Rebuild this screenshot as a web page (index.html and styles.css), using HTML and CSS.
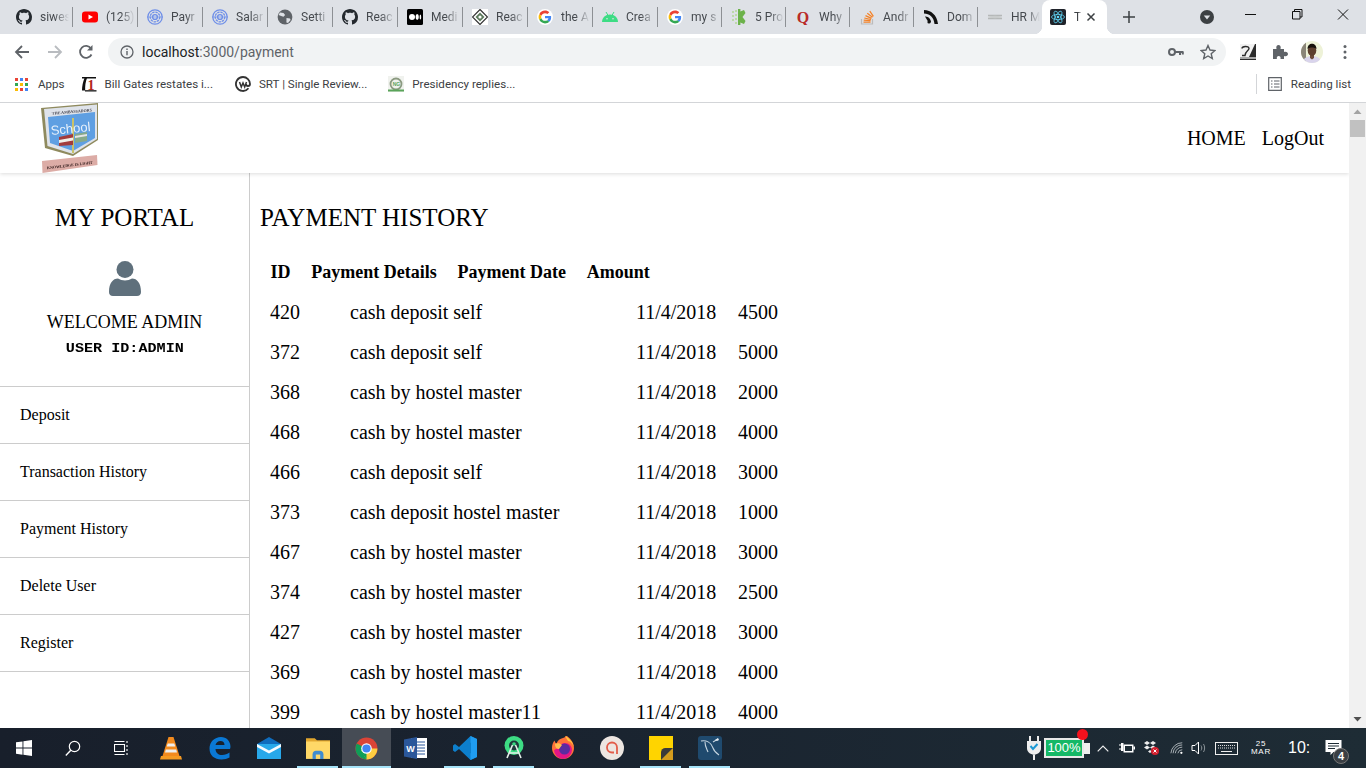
FILE: index.html
```html
<!DOCTYPE html>
<html lang="en">
<head>
<meta charset="utf-8">
<title>Payment History</title>
<link rel="stylesheet" href="styles.css">
</head>
<body>
<svg class="defs" width="0" height="0" aria-hidden="true">
  <symbol id="gh" viewBox="0 0 16 16"><path fill="#24292e" d="M8 0C3.58 0 0 3.58 0 8c0 3.54 2.29 6.53 5.47 7.59.4.07.55-.17.55-.38 0-.19-.01-.82-.01-1.49-2.01.37-2.53-.49-2.69-.94-.09-.23-.48-.94-.82-1.13-.28-.15-.68-.52-.01-.53.63-.01 1.08.58 1.23.82.72 1.21 1.87.87 2.33.66.07-.52.28-.87.51-1.07-1.78-.2-3.64-.89-3.64-3.95 0-.87.31-1.59.82-2.15-.08-.2-.36-1.02.08-2.12 0 0 .67-.21 2.2.82.64-.18 1.32-.27 2-.27.68 0 1.36.09 2 .27 1.53-1.04 2.2-.82 2.2-.82.44 1.1.16 1.92.08 2.12.51.56.82 1.27.82 2.15 0 3.07-1.87 3.75-3.65 3.95.29.25.54.73.54 1.48 0 1.07-.01 1.93-.01 2.2 0 .21.15.46.55.38A8.013 8.013 0 0016 8c0-4.42-3.58-8-8-8z"/></symbol>
  <symbol id="goo" viewBox="-6 -6 60 60"><circle cx="24" cy="24" r="30" fill="#fff"/><path fill="#EA4335" d="M24 9.5c3.54 0 6.71 1.22 9.21 3.6l6.85-6.85C35.9 2.38 30.47 0 24 0 14.62 0 6.51 5.38 2.56 13.22l7.98 6.19C12.43 13.72 17.74 9.5 24 9.5z"/><path fill="#4285F4" d="M46.98 24.55c0-1.57-.15-3.09-.38-4.55H24v9.02h12.94c-.58 2.96-2.26 5.48-4.78 7.18l7.73 6c4.51-4.18 7.09-10.36 7.09-17.65z"/><path fill="#FBBC05" d="M10.53 28.59c-.48-1.45-.76-2.99-.76-4.59s.27-3.14.76-4.59l-7.98-6.19C.92 16.46 0 20.12 0 24c0 3.88.92 7.54 2.56 10.78l7.97-6.19z"/><path fill="#34A853" d="M24 48c6.48 0 11.93-2.13 16.03-5.81l-7.73-6c-2.15 1.45-4.92 2.3-8.3 2.3-6.26 0-11.57-4.22-13.47-9.91l-7.98 6.19C6.51 42.62 14.62 48 24 48z"/></symbol>
  <symbol id="pay" viewBox="0 0 16 16"><g fill="none" stroke="#6f8fe8"><circle cx="8" cy="8" r="7.2" stroke-width="1.3"/><circle cx="8" cy="8" r="4.8" stroke-width="1.3" stroke-dasharray="2.4 .8"/><circle cx="8" cy="8" r="2.4" stroke-width="1.4"/><path d="M0 8h16" stroke-width=".7"/></g></symbol>
</svg>

<div class="tabstrip">
  <div class="tab"><svg class="fav"><use href="#gh"/></svg><span class="tab-title">siwes</span></div>
  <div class="tab"><svg class="fav" viewBox="0 0 16 16"><rect y="2.5" width="16" height="11" rx="3" fill="#f00"/><path d="M6.5 5.5v5L11 8z" fill="#fff"/></svg><span class="tab-title">(125)</span></div>
  <div class="tab"><svg class="fav"><use href="#pay"/></svg><span class="tab-title">Payr</span></div>
  <div class="tab"><svg class="fav"><use href="#pay"/></svg><span class="tab-title">Salar</span></div>
  <div class="tab"><svg class="fav" viewBox="0 0 16 16"><circle cx="8" cy="8" r="7.4" fill="#5f6368"/><path d="M3 3.5l3.5.6 1.6 2-1.6 1.6-1.6-.4L1.5 6zM9.5 9l3.5.6.6 1.5-2.6 3-1.6-.6z" fill="#dee1e6"/></svg><span class="tab-title">Setti</span></div>
  <div class="tab"><svg class="fav"><use href="#gh"/></svg><span class="tab-title">Reac</span></div>
  <div class="tab"><svg class="fav" viewBox="0 0 16 16"><rect width="16" height="16" rx="1.5" fill="#000"/><circle cx="5" cy="8" r="3" fill="#fff"/><ellipse cx="10.2" cy="8" rx="1.6" ry="2.9" fill="#fff"/><ellipse cx="13.4" cy="8" rx=".8" ry="2.6" fill="#fff"/></svg><span class="tab-title">Medi</span></div>
  <div class="tab"><svg class="fav" viewBox="0 0 16 16"><rect width="16" height="16" fill="#fff"/><path d="M8 .5L15.5 8 8 15.5.5 8z" fill="none" stroke="#333" stroke-width="1.2"/><path d="M8 3.5L12.5 8 8 12.5 3.5 8z" fill="#5d7a5d"/><circle cx="8" cy="8" r="1.6" fill="#fff"/></svg><span class="tab-title">Reac</span></div>
  <div class="tab"><svg class="fav"><use href="#goo"/></svg><span class="tab-title">the A</span></div>
  <div class="tab"><svg class="fav" viewBox="0 0 16 16"><path d="M0 13c0-4.4 3.6-7.5 8-7.5s8 3.1 8 7.5z" fill="#3ddc84"/><path d="M4 3l1.8 3M12 3l-1.8 3" stroke="#3ddc84" stroke-width="1"/><circle cx="5" cy="9.8" r=".8" fill="#dee1e6"/><circle cx="11" cy="9.8" r=".8" fill="#dee1e6"/></svg><span class="tab-title">Crea</span></div>
  <div class="tab narrow"><svg class="fav"><use href="#goo"/></svg><span class="tab-title">my s</span></div>
  <div class="tab narrow"><svg class="fav" viewBox="0 0 16 16"><g fill="#6cb24a"><rect x="7" y="0" width="2.4" height="16"/><path d="M8 3l5-2 1.5 3-3 4 3 4-1.5 3-5-2z"/></g><g fill="#bcd9a8"><rect x="1" y="2" width="2" height="2"/><rect x="4" y="1" width="2" height="2"/><rect x="1" y="6" width="2" height="2"/><rect x="4" y="5" width="2" height="2"/><rect x="1" y="10" width="2" height="2"/><rect x="4" y="9" width="2" height="2"/><rect x="4" y="13" width="2" height="2"/></g></svg><span class="tab-title">5 Pro</span></div>
  <div class="tab narrow"><svg class="fav" viewBox="0 0 16 16"><text class="quora" x="8" y="13.5" text-anchor="middle">Q</text></svg><span class="tab-title">Why</span></div>
  <div class="tab narrow"><svg class="fav" viewBox="0 0 16 16"><path d="M2.5 10v5h11v-5" fill="none" stroke="#bcbbbb" stroke-width="1.2"/><path d="M4.5 13.2h7M4.7 11.2l6.9.5M5.3 9l6.7 1.5M6.500 6.600l6 2.800M8.300 4.300l5.200 4M10.800 2.200l3.600 5.200" fill="none" stroke="#f48024" stroke-width="1.2"/></svg><span class="tab-title">Andr</span></div>
  <div class="tab narrow"><svg class="fav" viewBox="0 0 16 16"><path d="M1 1c7 0 13 5 14 14h-3.5C11 8.5 6.5 4.5 1 4.5z" fill="#111"/><path d="M2 7.5c3-.5 6 2.5 6 6l-3-1z" fill="#111"/><circle cx="6" cy="13" r="1.6" fill="#111"/></svg><span class="tab-title">Dom</span></div>
  <div class="tab narrow last"><svg class="fav" viewBox="0 0 16 16"><path d="M1 6.500h14M1 9.500h14" stroke="#b5b8b8" stroke-width="1.500"/><ellipse cx="8" cy="8" rx="7" ry="1.200" fill="#c9cccc"/></svg><span class="tab-title">HR M</span></div>
  <div class="tab-active">
    <svg class="fav" viewBox="0 0 16 16"><rect width="16" height="16" rx="2" fill="#20232a"/><g fill="none" stroke="#61dafb" stroke-width=".75"><ellipse cx="8" cy="8" rx="6.500" ry="2.600"/><ellipse cx="8" cy="8" rx="6.500" ry="2.600" transform="rotate(60 8 8)"/><ellipse cx="8" cy="8" rx="6.500" ry="2.600" transform="rotate(120 8 8)"/></g><circle cx="8" cy="8" r="1.300" fill="#61dafb"/></svg>
    <span class="tab-title active-title">T</span>
    <svg class="tab-close" viewBox="0 0 10 10"><path d="M1.500 1.500l7 7M8.500 1.500l-7 7" stroke="#3c4043" stroke-width="1.500"/></svg>
  </div>
  <svg class="new-tab" viewBox="0 0 12 12"><path d="M6 0v12M0 6h12" stroke="#3c4043" stroke-width="1.500"/></svg>
  <svg class="profile-drop" viewBox="0 0 14 14"><circle cx="7" cy="7" r="7" fill="#3c4043"/><path d="M3.800 5.500h6.400L7 9.500z" fill="#dee1e6"/></svg>
  <div class="win-btns">
    <svg class="win-btn" viewBox="0 0 46 34"><path d="M17 14.500h11" stroke="#111" stroke-width="1"/></svg>
    <svg class="win-btn" viewBox="0 0 46 34"><path d="M18.500 11.500h7.500v7.500h-7.500zM20.500 11.500v-2h7.500v7.500h-2" fill="none" stroke="#111" stroke-width="1"/></svg>
    <svg class="win-btn" viewBox="0 0 46 34"><path d="M18 9.500l10 10M28 9.500l-10 10" stroke="#111" stroke-width="1"/></svg>
  </div>
</div>

<div class="toolbar">
  <svg class="tool back" viewBox="0 0 16 16"><path d="M15 8H2M8 2L2 8l6 6" fill="none" stroke="#5f6368" stroke-width="1.800"/></svg>
  <svg class="tool fwd" viewBox="0 0 16 16"><path d="M1 8h13M8 2l6 6-6 6" fill="none" stroke="#b9bcc0" stroke-width="1.800"/></svg>
  <svg class="tool reload" viewBox="0 0 16 16"><path d="M13.500 10.500A6 6 0 1 1 13 4.500" fill="none" stroke="#5f6368" stroke-width="1.800"/><path d="M14.500 1v5.500H9z" fill="#5f6368"/></svg>
  <div class="omnibox">
    <svg class="info" viewBox="0 0 14 14"><circle cx="7" cy="7" r="6" fill="none" stroke="#5f6368" stroke-width="1.300"/><path d="M7 6v4.200M7 3.600v1.400" stroke="#5f6368" stroke-width="1.400"/></svg>
    <span class="url"><span class="url-host">localhost</span>:3000/payment</span>
    <svg class="key" viewBox="0 0 16 10"><circle cx="4" cy="5" r="3" fill="none" stroke="#5f6368" stroke-width="2"/><path d="M7 5h8.500M12 5v3M14.800 5v2.500" stroke="#5f6368" stroke-width="2"/></svg>
    <svg class="star" viewBox="0 0 16 16"><path d="M8 1.500l2 4.500 4.900.5-3.700 3.200 1.100 4.800L8 12l-4.300 2.500 1.100-4.800L1.100 6.500 6 6z" fill="none" stroke="#5f6368" stroke-width="1.400"/></svg>
  </div>
  <svg class="ext" viewBox="0 0 16 16"><rect width="16" height="16" fill="#2b2b2b"/><path d="M0 0h15L9 13H0z" fill="#f2f2f2"/><path d="M2 4.500c0-2.500 7-3 7 0 0 2-4 3-4 7h-3" fill="none" stroke="#2b2b2b" stroke-width="1.400"/><rect y="13" width="16" height="2" fill="#a8a8a8"/></svg>
  <svg class="puzzle" viewBox="0 0 16 16"><path d="M1 5h3.500c-.8-2.500.5-4 2-4s2.800 1.500 2 4H12v3c2.500-.8 4 .5 4 2s-1.500 2.800-4 2v3H8.500c.5-2-.5-3-1.800-3s-2.300 1-1.800 3H1z" fill="#5f6368"/></svg>
  <svg class="me" viewBox="0 0 22 22"><defs><clipPath id="mc"><circle cx="11" cy="11" r="11"/></clipPath></defs><g clip-path="url(#mc)"><rect width="22" height="22" fill="#eef2d8"/><rect width="5" height="22" fill="#8a8578"/><path d="M2 22c0-5 4-7 9-7s9 2 9 7z" fill="#d9d4ec"/><path d="M9 14h4v3l-2 1.500L9 17z" fill="#6b4a38"/><ellipse cx="11" cy="9.500" rx="4.300" ry="5.300" fill="#5d3f2e"/><path d="M6.500 8c0-7 9-7 9 0-2-2-7-2-9 0z" fill="#17110c"/></g></svg>
  <svg class="dots" viewBox="0 0 4 16"><circle cx="2" cy="2.500" r="1.500" fill="#5f6368"/><circle cx="2" cy="8" r="1.500" fill="#5f6368"/><circle cx="2" cy="13.500" r="1.500" fill="#5f6368"/></svg>
</div>

<div class="bookmarks">
  <div class="bm bm-apps">
    <svg class="bm-grid" viewBox="0 0 13 13"><rect width="3" height="3" fill="#ea4335"/><rect x="5" width="3" height="3" fill="#4285f4"/><rect x="10" width="3" height="3" fill="#ea4335"/><rect y="5" width="3" height="3" fill="#34a853"/><rect x="5" y="5" width="3" height="3" fill="#fbbc05"/><rect x="10" y="5" width="3" height="3" fill="#34a853"/><rect y="10" width="3" height="3" fill="#fbbc05"/><rect x="5" y="10" width="3" height="3" fill="#ea4335"/><rect x="10" y="10" width="3" height="3" fill="#4285f4"/></svg>
    <span>Apps</span>
  </div>
  <div class="bm bm-gates">
    <svg class="bm-ico" viewBox="0 0 16 16"><path d="M1 1h14v1.500H1z" fill="#111"/><path d="M3.500 2C2 6 1 10 1 14.500h3.200C4 10 4.500 6 6 2z" fill="#111"/><path d="M4 14.200h11.500v1.300H4z" fill="#111"/><text class="bm-one" x="10" y="13.500" text-anchor="middle">1</text></svg>
    <span>Bill Gates restates i...</span>
  </div>
  <div class="bm bm-srt">
    <svg class="bm-ico" viewBox="0 0 16 16"><path d="M8 1a7 7 0 1 0 5.500 11.300" fill="none" stroke="#333" stroke-width="1.800"/><path d="M8 1a7 7 0 0 1 7 7 2 2 0 0 1-4 0" fill="none" stroke="#333" stroke-width="1.800"/><path d="M4.500 6l1.800 5L8 7l1.700 4 1.800-5" fill="none" stroke="#333" stroke-width="1.500"/></svg>
    <span>SRT | Single Review...</span>
  </div>
  <div class="bm bm-pres">
    <svg class="bm-ico" viewBox="0 0 16 16"><rect width="16" height="16" fill="#f0f2ee"/><circle cx="8" cy="8" r="5.500" fill="none" stroke="#8b9a80" stroke-width="1.800"/><text class="bm-ng" x="8.500" y="10">NG</text><rect y="13.500" width="16" height="2" fill="#5aa45a"/></svg>
    <span>Presidency replies...</span>
  </div>
  <div class="reading">
    <svg class="bm-read" viewBox="0 0 14 14"><path d="M.7.700h12.600v12.600H.7zM3 4h1.500M6 4h5.500M3 7h1.500M6 7h5.500M3 10h1.500M6 10h5.500" fill="none" stroke="#5f6368" stroke-width="1.200"/></svg>
    <span>Reading list</span>
  </div>
</div>

<div class="viewport">
  <div class="site">
    <header class="site-header">
      <svg class="logo" viewBox="0 0 60 70">
        <path d="M1 5L58 0v37L33 53 5 45z" fill="#8f8a5e"/>
        <path d="M4 6L57 1.500V36L33 51 7.500 43z" fill="#dfe3ea"/>
        <path d="M8 14L55 9v26L33 48 10 40z" fill="#5f9fe2"/>
        <path d="M32 15h2v35h-2z" fill="#c9c26a"/>
        <text class="logo-top" x="32" y="10" text-anchor="middle" transform="rotate(-5 32 10)">THE AMBASSADORS</text>
        <text class="logo-school" x="31" y="30" text-anchor="middle" transform="rotate(-6 31 30)">School</text>
        <path d="M19 34l14-3v11l-14 1z" fill="#a33b3b"/>
        <path d="M19 37l14-2.500v3L19 40z" fill="#f1efe8"/>
        <path d="M35 31l12-2v9l-12 2z" fill="#86a98a"/>
        <path d="M35 33l12-2v2l-12 2z" fill="#e5e5e5"/>
        <path d="M2 58l55-6 .5 10-55 8z" fill="#dcaca6"/>
        <text class="logo-motto" x="30" y="63.500" text-anchor="middle" transform="rotate(-7 30 64)">KNOWLEDGE IS LIGHT</text>
      </svg>
      <nav class="site-nav"><a>HOME</a><a>LogOut</a></nav>
    </header>
    <div class="site-body">
      <aside class="sidebar">
        <h2 class="portal">MY PORTAL</h2>
        <svg class="avatar" viewBox="0 0 32 35"><circle cx="16" cy="8.500" r="8.500" fill="#5f707c"/><path d="M0 31c0-9 4-13.500 9-13.500 4 2.500 10 2.500 14 0 5 0 9 4.500 9 13.500 0 2.500-1.500 4-4 4H4c-2.500 0-4-1.500-4-4z" fill="#5f707c"/></svg>
        <div class="welcome">WELCOME ADMIN</div>
        <div class="userid">USER ID:ADMIN</div>
        <ul class="menu">
          <li>Deposit</li>
          <li>Transaction History</li>
          <li>Payment History</li>
          <li>Delete User</li>
          <li>Register</li>
        </ul>
      </aside>
      <main class="main">
        <h2 class="title">PAYMENT HISTORY</h2>
        <table class="head-table"><tr><th>ID</th><th>Payment Details</th><th>Payment Date</th><th>Amount</th></tr></table>
        <table class="data-table">
          <tr><td class="c-id">420</td><td class="c-det">cash deposit self</td><td class="c-date">11/4/2018</td><td>4500</td></tr>
          <tr><td class="c-id">372</td><td class="c-det">cash deposit self</td><td class="c-date">11/4/2018</td><td>5000</td></tr>
          <tr><td class="c-id">368</td><td class="c-det">cash by hostel master</td><td class="c-date">11/4/2018</td><td>2000</td></tr>
          <tr><td class="c-id">468</td><td class="c-det">cash by hostel master</td><td class="c-date">11/4/2018</td><td>4000</td></tr>
          <tr><td class="c-id">466</td><td class="c-det">cash deposit self</td><td class="c-date">11/4/2018</td><td>3000</td></tr>
          <tr><td class="c-id">373</td><td class="c-det">cash deposit hostel master</td><td class="c-date">11/4/2018</td><td>1000</td></tr>
          <tr><td class="c-id">467</td><td class="c-det">cash by hostel master</td><td class="c-date">11/4/2018</td><td>3000</td></tr>
          <tr><td class="c-id">374</td><td class="c-det">cash by hostel master</td><td class="c-date">11/4/2018</td><td>2500</td></tr>
          <tr><td class="c-id">427</td><td class="c-det">cash by hostel master</td><td class="c-date">11/4/2018</td><td>3000</td></tr>
          <tr><td class="c-id">369</td><td class="c-det">cash by hostel master</td><td class="c-date">11/4/2018</td><td>4000</td></tr>
          <tr><td class="c-id">399</td><td class="c-det">cash by hostel master11</td><td class="c-date">11/4/2018</td><td>4000</td></tr>
        </table>
      </main>
    </div>
  </div>
  <div class="scrollbar">
    <svg class="sb-arrow" viewBox="0 0 17 17"><path d="M4.500 11l4-4.500 4 4.500z" fill="#a3a3a3"/></svg>
    <div class="sb-thumb"></div>
    <svg class="sb-arrow sb-down" viewBox="0 0 17 17"><path d="M4.500 6l4 4.500 4-4.500z" fill="#505050"/></svg>
  </div>
</div>

<div class="taskbar">
  <div class="tb-item"><svg class="tb-ico" viewBox="0 0 16 16"><path d="M0 2.300l6.500-.9v6.200H0zM7.400 1.300L16 0v7.600H7.400zM0 8.500h6.500v6.200L0 13.700zM7.400 8.500H16V16l-8.600-1.200z" fill="#fff"/></svg></div>
  <div class="tb-item"><svg class="tb-ico" viewBox="0 0 16 16"><circle cx="9.500" cy="6.500" r="5.200" fill="none" stroke="#fff" stroke-width="1.200"/><path d="M5.800 10.200L.8 15.500" stroke="#fff" stroke-width="1.400"/></svg></div>
  <div class="tb-item"><svg class="tb-ico" viewBox="0 0 16 16"><path d="M.5 4.500h10v7H.5zM.5 1.500h10M.5 14.500h10M13 1v2M13 5v2M13 9v2M13 13v2" fill="none" stroke="#fff" stroke-width="1.100"/></svg></div>
  <div class="tb-item"><svg class="tb-big" viewBox="0 0 22 24"><path d="M8.500 1h5l6 19h-17z" fill="#f28a1e"/><path d="M7.700 7.500h6.600l.9 3H6.800zM5.800 13.500h10.400l.8 3H5z" fill="#eee"/><path d="M1 20h20l1 3.500H0z" fill="#f59a22"/></svg></div>
  <div class="tb-item"><svg class="tb-big" viewBox="0 0 22 24"><path d="M21 13H6.500c.3 4 3 6 6.500 6 3 0 5.500-1 7.500-2.500v5c-2 1.300-5 2-8 2-7 0-12-4-12-11C.5 6 5.500 1 12 1c5.500 0 9.500 4 9.500 10zM15.500 9c0-2.500-1.500-4-4-4-2.700 0-4.500 1.700-5 4z" fill="#0a78d4"/></svg></div>
  <div class="tb-item"><svg class="tb-big" viewBox="0 0 24 22"><path d="M12 0l12 7v15H0V7z" fill="#0f6cbd"/><path d="M0 7h24v15H0z" fill="#28a8ea"/><path d="M0 7l12 6.500L24 7v3l-12 6.500L0 10z" fill="#f6fbff"/></svg></div>
  <div class="tb-item"><svg class="tb-big" viewBox="0 0 22 20"><path d="M0 1h8l2 2h12v5H0z" fill="#e2a72e"/><rect y="4" width="22" height="16" fill="#ffd867"/><path d="M6 16c0-2.500 1.500-3.500 3-3.500h4c1.500 0 3 1 3 3.500v4H6z" fill="#3f8bd0"/><rect x="9" y="16" width="4" height="4" fill="#ffd867"/></svg></div>
  <div class="tb-item tb-active"><svg class="tb-big chrome" viewBox="0 0 24 24"><circle cx="12" cy="12" r="11.500" fill="#db4437"/><path d="M12 12L1.800 6.800A11.500 11.500 0 0 0 12 23.500z" fill="#0f9d58"/><path d="M12 12h11.300A11.500 11.500 0 0 1 12 23.500L6.500 14z" fill="#ffcd40"/><path d="M12 12L6.500 15.200 12 23.500z" fill="#0f9d58"/><circle cx="12" cy="12" r="5.500" fill="#fff"/><circle cx="12" cy="12" r="4.300" fill="#4285f4"/></svg></div>
  <div class="tb-item"><svg class="tb-big" viewBox="0 0 24 22"><rect x="7" y="1" width="16" height="20" fill="#fff"/><path d="M13 5h8M13 8h8M13 11h8M13 14h8M13 17h8" stroke="#2b579a" stroke-width="1"/><path d="M0 2.500L13 0v22L0 19.500z" fill="#2b579a"/><text class="word-w" x="6.500" y="15" text-anchor="middle">W</text></svg></div>
  <div class="tb-item"><svg class="tb-big" viewBox="0 0 24 24"><path d="M17.500 0L24 3v18l-6.500 3L6 13l-4 3-2-1.500v-5L2 8l4 3z" fill="#0d7fcc"/><path d="M17.500 0L24 3v18l-6.500 3z" fill="#1f9cf0"/><path d="M18 6.500L10.500 12l7.500 5.500z" fill="#0d7fcc"/></svg></div>
  <div class="tb-item"><svg class="tb-big" viewBox="0 0 22 24"><circle cx="11" cy="9.500" r="9.500" fill="#3ddc84"/><circle cx="11" cy="9.500" r="5" fill="#1f3b3c"/><circle cx="11" cy="8" r="1.800" fill="#3ddc84"/><path d="M9.500 9L4 22M12.500 9L18 22M6 17h10" stroke="#e6f0ea" stroke-width="1.600"/></svg></div>
  <div class="tb-item"><svg class="tb-big" viewBox="0 0 24 24"><path d="M12 2c3-.5 2-2.500 4-2 3 2.500 7 6 7 12a11 11 0 1 1-22 0C1 9 2 6 3.500 4.500 4 6 4.500 7 5.500 7.500 6.500 4.500 9 2.500 12 2z" fill="#ff7139"/><path d="M14 0c4 2 8 6 9 11-1-3-4-6-6-6z" fill="#ffc93c"/><path d="M3 14a9 9 0 0 0 18 0c0-4-3-7-7-7-3 0-5 2-5 4z" fill="#e31587"/><circle cx="13.500" cy="13" r="5.500" fill="#5a2ca0"/><path d="M4 8c2-1 5-1 7 1l-3 4c-2 0-4-1-4-5z" fill="#ffbd4f"/></svg></div>
  <div class="tb-item"><svg class="tb-big" viewBox="0 0 24 24"><circle cx="12" cy="12" r="12" fill="#ede6e1"/><path d="M17 18V11.500a5 5 0 1 0-5 5h2" fill="none" stroke="#e25d4a" stroke-width="1.800"/></svg></div>
  <div class="tb-item"><svg class="tb-big" viewBox="0 0 22 22"><rect width="22" height="22" fill="#ffd400"/><path d="M22 11v11H11z" fill="#d49c1e"/><path d="M22 11H15a4 4 0 0 0-4 4v7z" fill="#3a3a3a"/></svg></div>
  <div class="tb-item"><svg class="tb-big" viewBox="0 0 24 24"><rect width="24" height="24" rx="3" fill="#1f4a6e"/><path d="M3 5c5-1 10 1 12 7 1 3 3 5 6 7M7 6c0 5 2 7 3 10M15 6l5-3" fill="none" stroke="#c5d5e0" stroke-width="1.100"/><path d="M17 4l3-2 1 2-2 1z" fill="#e6edf2"/></svg></div>
  <div class="tray">
    <svg class="tr-shield" viewBox="0 0 16 24"><path d="M4 0v5M12 0v5" stroke="#eee" stroke-width="2"/><path d="M1 5h14v7c0 4-3 6-7 7-4-1-7-3-7-7z" fill="#eee"/><path d="M8 19v5" stroke="#eee" stroke-width="2"/><path d="M4.500 10l2.500 3 4.500-5" fill="none" stroke="#1d9ad6" stroke-width="2"/></svg>
    <div class="batt">
      <div class="batt-box">100%</div>
      <div class="batt-cap"></div>
      <span class="batt-dot"></span>
    </div>
    <svg class="tr-chev" viewBox="0 0 12 7"><path d="M.7 6.300L6 1l5.300 5.300" fill="none" stroke="#eee" stroke-width="1.200"/></svg>
    <svg class="tr-plug" viewBox="0 0 16 12"><path d="M0 3h2M0 7h2" stroke="#fff" stroke-width="1.200"/><path d="M2 1h2.500v8H2z" fill="#fff"/><rect x="4.500" y="2.500" width="10" height="8" fill="#fff"/><rect x="14.500" y="4.500" width="1.500" height="3" fill="#fff"/><rect x="6" y="4" width="7" height="5" fill="#1e2c35"/></svg>
    <svg class="tr-drop" viewBox="0 0 16 14"><path d="M4 0l3 2-3 2-3-2zM10 0l3 2-3 2-3-2zM4 4.400l3 2-3 2-3-2zM10 4.400l3 2-3 2-3-2zM7 9l2 1.500-2 1.500-2-1.500z" fill="#eee"/><circle cx="12" cy="10" r="4" fill="#d3202e"/><path d="M10.500 8.500l3 3M13.500 8.500l-3 3" stroke="#fff" stroke-width="1"/></svg>
    <svg class="tr-wifi" viewBox="0 0 16 14"><g fill="none" stroke="#b8bfc4" stroke-width="1"><path d="M1 13A13 13 0 0 1 14 1"/><path d="M3.500 13A10 10 0 0 1 14 3.500"/><path d="M6 13A8 8 0 0 1 14 6"/><path d="M9 13a5 5 0 0 1 5-4"/></g><circle cx="13" cy="12.500" r="1.300" fill="#fff"/></svg>
    <svg class="tr-vol" viewBox="0 0 16 14"><path d="M1 4.500h3L7.500 1v12L4 9.500H1z" fill="none" stroke="#fff"/><path d="M10 4.500c1 1.500 1 3.500 0 5M12.500 3c1.500 2.500 1.500 5.500 0 8" fill="none" stroke="#8a9297"/></svg>
    <svg class="tr-keys" viewBox="0 0 23 13"><rect x=".5" y=".5" width="22" height="12" fill="none" stroke="#eee"/><path d="M3 3.500h17M3 6h17" stroke="#ddd" stroke-dasharray="1 1"/><path d="M6 9.500h11" stroke="#eee"/></svg>
    <div class="tr-date"><span>25</span><span>MAR</span></div>
    <div class="tr-time">10:</div>
    <div class="tr-note">
      <svg class="tr-msg" viewBox="0 0 16 16"><path d="M0 0h16v12H8l-3 3v-3H0z" fill="#fff"/><path d="M2.500 3.500h11M2.500 6h11M2.500 8.500h7" stroke="#1e2c35"/></svg>
      <span class="tr-badge">4</span>
    </div>
  </div>
</div>
</body>
</html>
```
FILE: styles.css
```css
* { box-sizing: border-box; }
html, body { margin: 0; height: 768px; overflow: hidden; }
body { display: flex; flex-direction: column; width: 1366px; background: #fff; font-family: "Liberation Serif", serif; color: #000; }
.defs { position: absolute; }

/* tab strip */
.tabstrip { height: 34px; flex: none; display: flex; background: #dee1e6; padding-left: 8px; font: 12px Roboto, sans-serif; color: #45494e; }
.tab { width: 65px; height: 34px; display: flex; align-items: center; padding: 0 0 0 9px; position: relative; flex: none; }
.tab:first-child { padding-left: 8px; }
.tab.narrow { width: 64px; }
.tab::after { content: ""; position: absolute; right: 0; top: 7px; height: 20px; width: 1px; background: #8d9094; }
.tab.last::after { display: none; }
.fav { width: 16px; height: 16px; flex: none; }
.tab-title { margin-left: 8px; width: 29px; overflow: hidden; white-space: nowrap; -webkit-mask-image: linear-gradient(90deg, #000 50%, transparent); mask-image: linear-gradient(90deg, #000 50%, transparent); }
.tab-active { width: 65px; height: 34px; flex: none; display: flex; align-items: center; background: #fff; border-radius: 8px 8px 0 0; padding-left: 8px; position: relative; color: #3c4043; }
.tab-active::before, .tab-active::after { content: ""; position: absolute; bottom: 0; width: 8px; height: 8px; }
.tab-active::before { left: -8px; background: radial-gradient(circle at 0 0, transparent 8px, #fff 8.500px); }
.tab-active::after { right: -8px; background: radial-gradient(circle at 100% 0, transparent 8px, #fff 8.500px); }
.active-title { width: 8px; margin-left: 8px; }
.tab-close { width: 10px; height: 10px; margin-left: 4px; flex: none; }
.new-tab { width: 12px; height: 12px; margin: 11px 0 0 16px; flex: none; }
.profile-drop { width: 14px; height: 14px; margin: 10px 0 0 65px; flex: none; }
.win-btns { display: flex; margin-left: auto; }
.win-btn { width: 46px; height: 34px; flex: none; }

/* toolbar */
.toolbar { height: 34px; flex: none; display: flex; align-items: center; background: #fff; padding: 2px 0 0 14px; }
.tool { width: 16px; height: 16px; flex: none; }
.fwd { margin-left: 17px; }
.reload { margin-left: 15px; }
.omnibox { width: 1118px; height: 28px; margin-left: 14px; display: flex; align-items: center; background: #f1f3f4; border-radius: 14px; padding: 0 10px 0 12px; flex: none; }
.info { width: 14px; height: 14px; flex: none; }
.url { margin-left: 8px; font: 14px Roboto, sans-serif; color: #5f6368; }
.url-host { color: #202124; }
.key { width: 16px; height: 10px; margin-left: auto; flex: none; }
.star { width: 16px; height: 16px; margin-left: 16px; flex: none; }
.ext { width: 16px; height: 16px; margin-left: 14px; flex: none; }
.puzzle { width: 16px; height: 16px; margin-left: 16px; flex: none; }
.me { width: 22px; height: 22px; margin-left: 13px; flex: none; }
.dots { width: 4px; height: 16px; margin-left: 20px; flex: none; }

/* bookmarks */
.bookmarks { height: 35px; flex: none; display: flex; align-items: center; background: #fff; border-bottom: 1px solid #d3d5d8; padding: 0 0 2px 15px; font: 11.600px Roboto, sans-serif; color: #3c4043; }
.bookmarks span { white-space: nowrap; }
.bm { display: flex; align-items: center; flex: none; }
.bm-grid { width: 13px; height: 13px; margin-right: 10px; flex: none; }
.bm-ico { width: 16px; height: 16px; margin-right: 8px; flex: none; }
.bm-gates { margin-left: 16px; }
.bm-srt { margin-left: 22px; }
.bm-pres { margin-left: 21px; }
.bm-one { font: bold 14px "Liberation Serif", serif; fill: #b3261e; }
.bm-ng { font: bold 5px "Liberation Sans", sans-serif; fill: #5aa45a; text-anchor: middle; }
.reading { margin-left: auto; display: flex; align-items: center; height: 20px; border-left: 1px solid #d3d5d8; padding-left: 11px; margin-right: 15px; }
.bm-read { width: 14px; height: 14px; margin-right: 9px; flex: none; }
.quora { font: bold 16px "Liberation Serif", serif; fill: #b92b27; }

/* page */
.viewport { flex: 1; min-height: 0; display: flex; overflow: hidden; }
.site { flex: 1; min-width: 0; display: flex; flex-direction: column; overflow: hidden; }
.site-header { height: 70px; flex: none; display: flex; align-items: center; justify-content: space-between; padding: 0 25px 0 40px; box-shadow: 0 1px 4px rgba(0,0,0,.14); position: relative; }
.logo { width: 60px; height: 70px; flex: none; filter: blur(.35px); }
.logo-top { font: bold 4px "Liberation Serif", serif; fill: #3d3d48; }
.logo-school { font: 13px "Liberation Sans", sans-serif; fill: #e6f0fb; }
.logo-motto { font: bold 4px "Liberation Serif", serif; fill: #2a1616; }
.site-nav { display: flex; gap: 16px; padding-top: 1px; font-size: 20px; }
.site-body { flex: 1; min-height: 0; display: flex; }
.sidebar { width: 250px; flex: none; border-right: 1px solid #ccc; display: flex; flex-direction: column; align-items: center; }
.portal { margin: 30px 0 0; font-size: 25px; line-height: 30px; font-weight: 400; }
.avatar { width: 32px; height: 35px; margin-top: 28px; flex: none; }
.welcome { margin-top: 15px; font-size: 18px; line-height: 22px; }
.userid { margin-top: 7px; font: 12px/18px "Liberation Mono", monospace; font-weight: 700; transform: scaleX(1.26); white-space: nowrap; }
.menu { list-style: none; margin: 28px 0 0; padding: 0; width: 100%; border-top: 1px solid #ccc; }
.menu li { height: 57px; line-height: 56px; padding-left: 20px; font-size: 16px; border-bottom: 1px solid #ccc; }
.main { flex: 1; min-width: 0; padding-left: 10px; }
.title { margin: 30px 0 0; font-size: 25px; line-height: 30px; font-weight: 400; }
.head-table { margin-top: 20px; border-collapse: separate; border-spacing: 0; font-size: 18px; }
.head-table th { padding: 8px 10.400px; line-height: 22px; font-weight: 700; text-align: left; white-space: nowrap; }
.data-table { border-collapse: separate; border-spacing: 0; font-size: 20px; table-layout: fixed; width: 530px; margin-top: 1px; }
.data-table td { height: 40px; padding: 0 0 0 10px; white-space: nowrap; }
.c-id { width: 80px; }
.c-det { width: 286px; }
.c-date { width: 102px; }

/* scrollbar */
.scrollbar { width: 17px; flex: none; background: #f1f1f1; display: flex; flex-direction: column; }
.sb-arrow { width: 17px; height: 17px; flex: none; }
.sb-thumb { width: 15px; height: 17px; margin-left: 1px; background: #c1c1c1; flex: none; }
.sb-down { margin-top: auto; }

/* taskbar */
.taskbar { height: 40px; flex: none; display: flex; align-items: center; background: linear-gradient(90deg, #181f2b 0%, #1a2430 45%, #1e2c35 100%); }
.tb-item { width: 49px; height: 40px; flex: none; display: flex; align-items: center; justify-content: center; position: relative; }
.tb-item:first-child { width: 48px; }
.tb-active { background: #464c55; }
.tb-item:nth-child(7)::after, .tb-item:nth-child(8)::after, .tb-item:nth-child(10)::after, .tb-item:nth-child(11)::after, .tb-item:nth-child(14)::after, .tb-item:nth-child(15)::after { content: ""; position: absolute; left: 4px; right: 4px; bottom: 0; height: 2px; background: #a6e3f8; }
.tb-active::after { left: 0 !important; right: 0 !important; }
.tb-ico { width: 16px; height: 16px; flex: none; }
.tb-big { width: 24px; height: 24px; flex: none; }
.chrome { width: 23px; height: 23px; }
.word-w { font: bold 9px "Liberation Sans", sans-serif; fill: #fff; }
.tray { margin-left: auto; display: flex; align-items: center; height: 40px; color: #fff; font-family: "Liberation Sans", sans-serif; }
.tr-shield { width: 16px; height: 24px; flex: none; }
.batt { display: flex; align-items: center; margin-left: 2px; position: relative; }
.batt-box { width: 40px; height: 20px; border: 2px solid #e8e8e8; background: #14b866; color: #fff; font-size: 13px; line-height: 16px; text-align: center; }
.batt-cap { width: 6px; height: 11px; background: #eee; }
.batt-dot { position: absolute; right: 2px; top: -9px; width: 11px; height: 11px; border-radius: 50%; background: #f5111d; }
.tr-chev { width: 12px; height: 7px; margin-left: 7px; flex: none; }
.tr-plug { width: 16px; height: 12px; margin-left: 10px; flex: none; }
.tr-drop { width: 16px; height: 14px; margin-left: 8px; flex: none; }
.tr-wifi { width: 14px; height: 14px; margin-left: 11px; flex: none; }
.tr-vol { width: 16px; height: 14px; margin-left: 7px; flex: none; }
.tr-keys { width: 23px; height: 13px; margin-left: 8px; flex: none; }
.tr-date { display: flex; flex-direction: column; align-items: center; width: 20px; margin-left: 13px; font-size: 8px; line-height: 8px; letter-spacing: .8px; flex: none; }
.tr-time { width: 22px; margin-left: 17px; font-size: 16px; flex: none; }
.tr-note { position: relative; width: 17px; height: 16px; margin: 0 24px 0 15px; flex: none; }
.tr-msg { width: 17px; height: 16px; display: block; }
.tr-badge { position: absolute; left: 8px; top: 8px; width: 16px; height: 16px; border-radius: 50%; background: #3a3f44; border: 1px solid #777; color: #fff; font-size: 11px; font-weight: 700; line-height: 14px; text-align: center; }
```
